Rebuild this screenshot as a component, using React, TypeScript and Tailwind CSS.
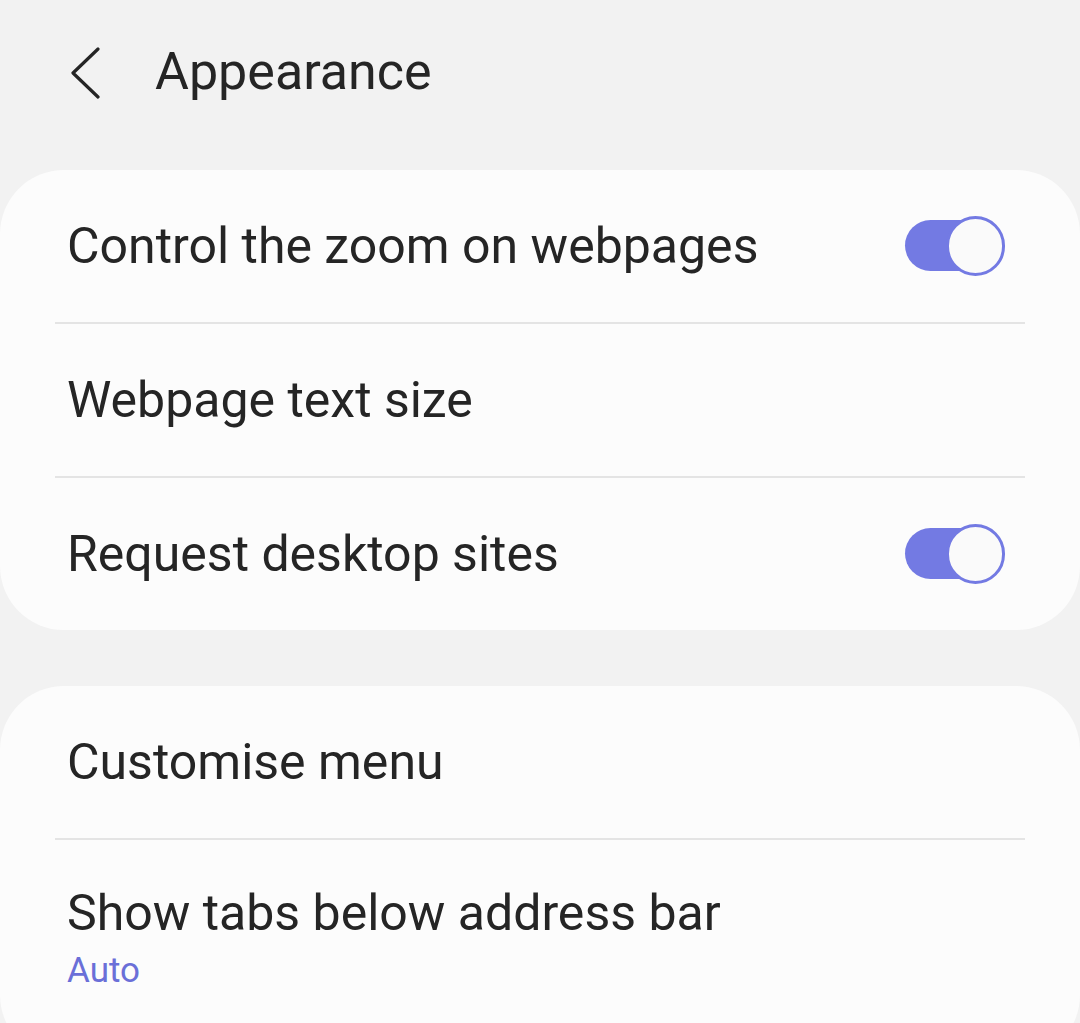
import { ReactNode } from "react";

function Toggle() {
  return (
    <div className="relative h-[60px] w-[100px] shrink-0">
      <div className="absolute left-0 top-[4px] h-[51px] w-[86px] rounded-full bg-[#737ae3]" />
      <div className="absolute right-0 top-0 h-[60px] w-[59px] rounded-full border-[3px] border-[#737ae3] bg-[#fafafa]" />
    </div>
  );
}

function Row({ title, right }: { title: string; right?: ReactNode }) {
  return (
    <div className="flex h-[152px] items-center justify-between pl-[67px] pr-[75px]">
      <span className="text-[50px] leading-[60px] text-[#252525]">{title}</span>
      {right}
    </div>
  );
}

function Divider() {
  return <div className="mx-[55px] h-[2px] bg-[#e4e4e4]" />;
}

export default function App() {
  return (
    <div className="min-h-[1023px] w-full overflow-hidden bg-[#f2f2f2] font-['Roboto',sans-serif]">
      <header className="flex h-[170px] items-start pt-[40px]">
        <div className="flex h-[64px] items-center pl-[70px]">
          <svg width="32" height="54" viewBox="0 0 32 54" fill="none">
            <path d="M28 4 L3 28 L28 52" stroke="#252525" strokeWidth="3.2" strokeLinecap="round" strokeLinejoin="round" />
          </svg>
        </div>
        <h1 className="ml-[53px] text-[52px] leading-[64px] text-[#252525]">Appearance</h1>
      </header>

      <section className="rounded-[64px] bg-[#fcfcfc]">
        <Row title="Control the zoom on webpages" right={<Toggle />} />
        <Divider />
        <Row title="Webpage text size" />
        <Divider />
        <Row title="Request desktop sites" right={<Toggle />} />
      </section>

      <section className="mt-[56px] rounded-[64px] bg-[#fcfcfc]">
        <Row title="Customise menu" />
        <Divider />
        <div className="flex flex-col pb-[60px] pl-[67px] pr-[75px] pt-[43px]">
          <span className="text-[50px] leading-[60px] text-[#252525]">Show tabs below address bar</span>
          <span className="text-[35px] leading-[56px] text-[#6a6fd8]">Auto</span>
        </div>
      </section>
    </div>
  );
}
